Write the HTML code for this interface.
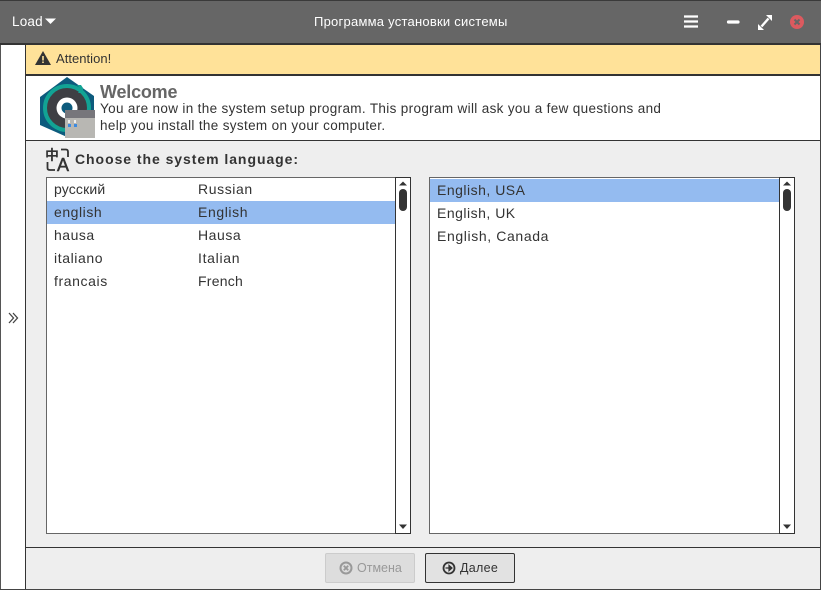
<!DOCTYPE html>
<html><head><meta charset="utf-8">
<style>
html,body{margin:0;padding:0;width:821px;height:590px;overflow:hidden;background:#eee}
body{position:relative;font-family:"Liberation Sans","Noto Sans CJK SC",sans-serif;color:#333;font-size:14px}
.a{position:absolute}
.t{position:absolute;white-space:nowrap;line-height:16px}
</style></head><body>
<div class="a" style="left:0;top:0;width:821px;height:44px;background:#666;border-top:1px solid #3a3a3a;box-sizing:border-box"></div>
<div class="a" style="left:0;top:43px;width:821px;height:2px;background:#333"></div>
<div class="t" style="left:12px;top:14px;color:#fff;font-size:13.5px;letter-spacing:.2px">Load</div>
<svg class="a" style="left:45px;top:18px" width="11" height="7"><path d="M0 0.500H11L5.500 6Z" fill="#fff"/></svg>
<div class="t" style="left:314px;top:14px;color:#fff;font-size:13px;letter-spacing:.24px">Программа установки системы</div>
<svg class="a" style="left:680px;top:12px" width="130" height="20">
<path d="M4 4.500H18M4 9.500H18M4 14.500H18" stroke="#fff" stroke-width="2.200"/>
<path d="M48.500 10H58" stroke="#fff" stroke-width="3.200" stroke-linecap="round"/>
<path d="M78 18V12L84 18ZM92 3H86L92 9Z" fill="#fff"/><path d="M81.500 14.500L88.500 6.500" stroke="#fff" stroke-width="2.400"/>
<circle cx="117" cy="10" r="7" fill="#dc5a5f"/><path d="M114.500 7.500L119.500 12.500M119.500 7.500L114.500 12.500" stroke="#666" stroke-width="2"/>
</svg>

<div class="a" style="left:0;top:45px;width:1px;height:545px;background:#555"></div>
<div class="a" style="left:1px;top:45px;width:24px;height:545px;background:#fff"></div>
<div class="a" style="left:25px;top:45px;width:1px;height:545px;background:#333"></div>
<svg class="a" style="left:8px;top:312px" width="11" height="12"><path d="M1 1L5.500 6L1 11M5 1L9.500 6L5 11" fill="none" stroke="#444" stroke-width="1.300"/></svg>
<div class="a" style="left:820px;top:45px;width:1px;height:545px;background:#444"></div>
<div class="a" style="left:0;top:589px;width:821px;height:1px;background:#444"></div>

<div class="a" style="left:26px;top:45px;width:794px;height:29px;background:#ffe299"></div>
<div class="a" style="left:26px;top:74px;width:794px;height:2px;background:#333"></div>
<svg class="a" style="left:35px;top:50px" width="16" height="16"><path d="M8 1L16 15H0Z" fill="#333"/><path d="M8 6V10.500M8 11.500V13" stroke="#ffe299" stroke-width="1.600"/></svg>
<div class="t" style="left:56px;top:51px;font-size:13px;letter-spacing:.03px">Attention!</div>

<div class="a" style="left:26px;top:76px;width:794px;height:64px;background:#fff"></div>
<div class="a" style="left:26px;top:140px;width:794px;height:1px;background:#333"></div>
<svg class="a" style="left:40px;top:77px" width="56" height="62">
<path d="M27 0L54 19V46L27 60L0 48V20Z" fill="#0d5b7d"/>
<circle cx="27" cy="31" r="22" fill="#3e3f44" stroke="#12a394" stroke-width="4"/>
<circle cx="27" cy="31" r="10.500" fill="#fff"/>
<circle cx="27" cy="31" r="5.500" fill="#0d5b7d"/>
<path d="M37 8L41 12L38 16L43 16L43 11L41 8Z" fill="#12a394"/>
<rect x="25" y="33" width="30" height="28" fill="#b8b7b3"/>
<rect x="25" y="33" width="30" height="8" fill="#77767b"/>
<rect x="28" y="43" width="2" height="3" fill="#eee"/><rect x="34" y="43" width="2" height="3" fill="#eee"/>
<rect x="28" y="47" width="3" height="3" fill="#3c8ae0"/><rect x="34" y="47" width="3" height="3" fill="#3c8ae0"/>
</svg>
<div class="t" style="left:100px;top:84px;font-size:18px;font-weight:bold;color:#666;letter-spacing:-.2px">Welcome</div>
<div class="t" style="left:100px;top:101px;font-size:13.5px;letter-spacing:.34px">You are now in the system setup program. This program will ask you a few questions and</div>
<div class="t" style="left:100px;top:118px;font-size:13.5px;letter-spacing:.34px">help you install the system on your computer.</div>

<div class="t" style="left:45px;top:147px;font-family:'Noto Sans CJK SC',sans-serif;font-size:14px;font-weight:bold;line-height:16px">中</div>
<div class="t" style="left:57px;top:157px;font-size:18px;font-weight:normal;line-height:16px;-webkit-text-stroke:.5px #333">A</div>
<svg class="a" style="left:46px;top:148px" width="24" height="24"><path d="M15 1.500H20Q22 1.500 22 4V9M1.500 14V20Q1.500 22 4 22H9" fill="none" stroke="#333" stroke-width="1.800"/></svg>
<div class="t" style="left:75px;top:151px;font-size:14px;font-weight:bold;letter-spacing:.95px">Choose the system language:</div>

<!-- left list -->
<div class="a" style="left:46px;top:177px;width:350px;height:357px;background:#fff;border:1px solid #666;box-sizing:border-box"></div>
<div class="a" style="left:395px;top:177px;width:16px;height:357px;background:#fff;border:1px solid #333;box-sizing:border-box"></div>
<div class="a" style="left:47px;top:201px;width:348px;height:23px;background:#94bbf0"></div>
<svg class="a" style="left:396px;top:178px" width="14" height="355"><path d="M3 7.500H11L7 3.500Z" fill="#333"/><rect x="3" y="11" width="8" height="22" rx="4" fill="#333"/><path d="M3 346.500H11L7 351Z" fill="#333"/></svg>
<div class="t" style="left:54px;top:181px;letter-spacing:.15px">русский</div><div class="t" style="left:198px;top:181px;letter-spacing:.6px">Russian</div>
<div class="t" style="left:54px;top:204px;letter-spacing:.55px">english</div><div class="t" style="left:198px;top:204px;letter-spacing:.6px">English</div>
<div class="t" style="left:54px;top:227px;letter-spacing:.5px">hausa</div><div class="t" style="left:198px;top:227px;letter-spacing:.55px">Hausa</div>
<div class="t" style="left:54px;top:250px;letter-spacing:.6px">italiano</div><div class="t" style="left:198px;top:250px;letter-spacing:.7px">Italian</div>
<div class="t" style="left:54px;top:273px;letter-spacing:.6px">francais</div><div class="t" style="left:198px;top:273px;letter-spacing:.25px">French</div>

<!-- right list -->
<div class="a" style="left:429px;top:177px;width:351px;height:357px;background:#fff;border:1px solid #666;box-sizing:border-box"></div>
<div class="a" style="left:779px;top:177px;width:16px;height:357px;background:#fff;border:1px solid #333;box-sizing:border-box"></div>
<div class="a" style="left:430px;top:179px;width:349px;height:23px;background:#94bbf0"></div>
<svg class="a" style="left:780px;top:178px" width="14" height="355"><path d="M3 7.500H11L7 3.500Z" fill="#333"/><rect x="3" y="11" width="8" height="22" rx="4" fill="#333"/><path d="M3 346.500H11L7 351Z" fill="#333"/></svg>
<div class="t" style="left:437px;top:182px;letter-spacing:.5px">English, USA</div>
<div class="t" style="left:437px;top:205px;letter-spacing:.5px">English, UK</div>
<div class="t" style="left:437px;top:228px;letter-spacing:.62px">English, Canada</div>

<!-- footer -->
<div class="a" style="left:26px;top:547px;width:794px;height:1px;background:#333"></div>
<div class="a" style="left:325px;top:553px;width:90px;height:30px;background:#ddd;border:1px solid #ccc;border-radius:2px;box-sizing:border-box"></div>
<svg class="a" style="left:339px;top:561px" width="14" height="14"><circle cx="7" cy="7" r="5.500" fill="none" stroke="#999" stroke-width="2"/><path d="M4.800 4.800L9.200 9.200M9.200 4.800L4.800 9.200" stroke="#999" stroke-width="1.800"/></svg>
<div class="t" style="left:357px;top:560px;font-size:12.5px;color:#999;letter-spacing:0">Отмена</div>
<div class="a" style="left:425px;top:553px;width:90px;height:30px;background:#e2e2e2;border:1px solid #333;border-radius:2px;box-sizing:border-box"></div>
<svg class="a" style="left:442px;top:561px" width="14" height="14"><circle cx="7" cy="7" r="5.500" fill="none" stroke="#333" stroke-width="1.800"/><path d="M3.500 7H9M7 4.300L10 7L7 9.700Z" fill="#333" stroke="#333" stroke-width="1.200"/></svg>
<div class="t" style="left:460px;top:560px;font-size:12.5px;letter-spacing:.3px">Далее</div>
</body></html>
